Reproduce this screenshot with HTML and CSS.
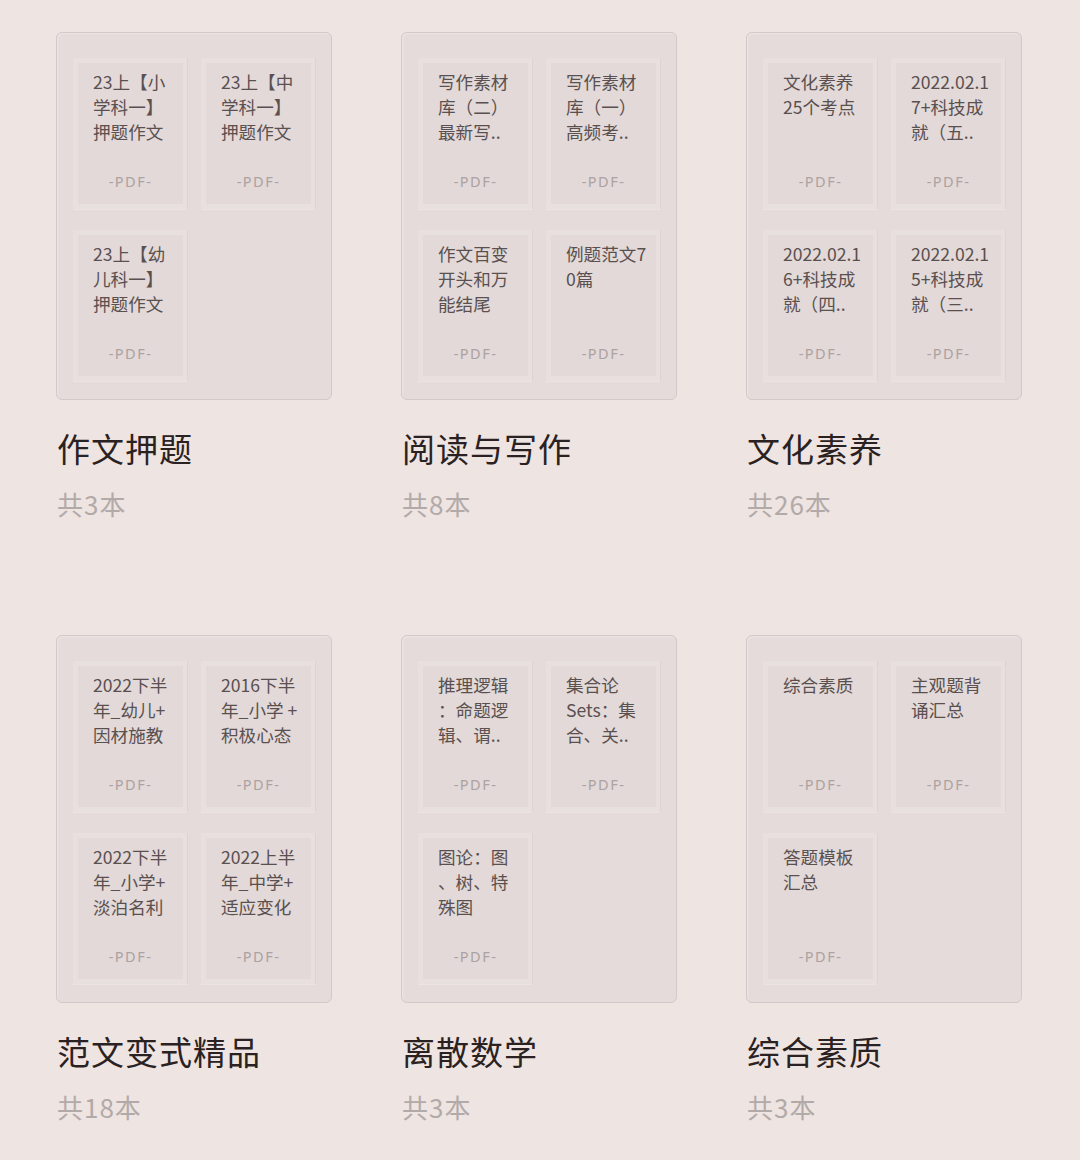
FILE: index.html
```html
<!DOCTYPE html>
<html lang="zh">
<head>
<meta charset="utf-8">
<link rel="stylesheet" href="styles.css">
</head>
<body>
<main class="shelf">
  <section class="group">
    <div class="cover">
      <div class="book"><div class="book-title"><span>23上【小</span><span>学科一】</span><span>押题作文</span></div><div class="pdf">-PDF-</div></div>
      <div class="book"><div class="book-title"><span>23上【中</span><span>学科一】</span><span>押题作文</span></div><div class="pdf">-PDF-</div></div>
      <div class="book"><div class="book-title"><span>23上【幼</span><span>儿科一】</span><span>押题作文</span></div><div class="pdf">-PDF-</div></div>
    </div>
    <h2 class="name">作文押题</h2>
    <p class="count">共3本</p>
  </section>
  <section class="group">
    <div class="cover">
      <div class="book"><div class="book-title"><span>写作素材</span><span>库（二）</span><span>最新写..</span></div><div class="pdf">-PDF-</div></div>
      <div class="book"><div class="book-title"><span>写作素材</span><span>库（一）</span><span>高频考..</span></div><div class="pdf">-PDF-</div></div>
      <div class="book"><div class="book-title"><span>作文百变</span><span>开头和万</span><span>能结尾</span></div><div class="pdf">-PDF-</div></div>
      <div class="book"><div class="book-title"><span>例题范文7</span><span>0篇</span></div><div class="pdf">-PDF-</div></div>
    </div>
    <h2 class="name">阅读与写作</h2>
    <p class="count">共8本</p>
  </section>
  <section class="group">
    <div class="cover">
      <div class="book"><div class="book-title"><span>文化素养</span><span>25个考点</span></div><div class="pdf">-PDF-</div></div>
      <div class="book"><div class="book-title"><span>2022.02.1</span><span>7+科技成</span><span>就（五..</span></div><div class="pdf">-PDF-</div></div>
      <div class="book"><div class="book-title"><span>2022.02.1</span><span>6+科技成</span><span>就（四..</span></div><div class="pdf">-PDF-</div></div>
      <div class="book"><div class="book-title"><span>2022.02.1</span><span>5+科技成</span><span>就（三..</span></div><div class="pdf">-PDF-</div></div>
    </div>
    <h2 class="name">文化素养</h2>
    <p class="count">共26本</p>
  </section>
  <section class="group">
    <div class="cover">
      <div class="book"><div class="book-title"><span>2022下半</span><span>年_幼儿+</span><span>因材施教</span></div><div class="pdf">-PDF-</div></div>
      <div class="book"><div class="book-title"><span>2016下半</span><span>年_小学 +</span><span>积极心态</span></div><div class="pdf">-PDF-</div></div>
      <div class="book"><div class="book-title"><span>2022下半</span><span>年_小学+</span><span>淡泊名利</span></div><div class="pdf">-PDF-</div></div>
      <div class="book"><div class="book-title"><span>2022上半</span><span>年_中学+</span><span>适应变化</span></div><div class="pdf">-PDF-</div></div>
    </div>
    <h2 class="name">范文变式精品</h2>
    <p class="count">共18本</p>
  </section>
  <section class="group">
    <div class="cover">
      <div class="book"><div class="book-title"><span>推理逻辑</span><span>：命题逻</span><span>辑、谓..</span></div><div class="pdf">-PDF-</div></div>
      <div class="book"><div class="book-title"><span>集合论</span><span>Sets：集</span><span>合、关..</span></div><div class="pdf">-PDF-</div></div>
      <div class="book"><div class="book-title"><span>图论：图</span><span>、树、特</span><span>殊图</span></div><div class="pdf">-PDF-</div></div>
    </div>
    <h2 class="name">离散数学</h2>
    <p class="count">共3本</p>
  </section>
  <section class="group">
    <div class="cover">
      <div class="book"><div class="book-title"><span>综合素质</span></div><div class="pdf">-PDF-</div></div>
      <div class="book"><div class="book-title"><span>主观题背</span><span>诵汇总</span></div><div class="pdf">-PDF-</div></div>
      <div class="book"><div class="book-title"><span>答题模板</span><span>汇总</span></div><div class="pdf">-PDF-</div></div>
    </div>
    <h2 class="name">综合素质</h2>
    <p class="count">共3本</p>
  </section>
</main>
</body>
</html>
```

FILE: styles.css
```css
html, body {
  margin: 0;
  padding: 0;
  background: #eee4e1;
}

body {
  font-family: "Noto Sans CJK SC", "Noto Sans", sans-serif;
  width: 1080px;
  height: 1160px;
  overflow: hidden;
}

.shelf {
  display: grid;
  grid-template-columns: repeat(3, 276px);
  column-gap: 69px;
  row-gap: 115px;
  padding: 32px 0 0 56px;
}

.cover {
  box-sizing: border-box;
  width: 276px;
  height: 368px;
  background: #e4dbda;
  border: 1px solid #d3c9c8;
  border-radius: 6px;
  padding: 25px 17px 0 16px;
  display: grid;
  grid-template-columns: 114px 114px;
  grid-template-rows: 151px 151px;
  column-gap: 14px;
  row-gap: 21px;
  box-shadow: inset 1px 1px 2px rgba(255, 255, 255, 0.35);
}

.book {
  box-sizing: border-box;
  border: 5px solid #e8e0df;
  border-right-width: 4px;
  background: #e2d9d8;
  display: flex;
  flex-direction: column;
  padding: 6px 0 0 15px;
  box-shadow: 0 1px 0 #ebe4e3, 1px 0 0 #ddd4d3;
}

.book-title {
  display: flex;
  flex-direction: column;
  font-size: 17.6px;
  line-height: 25px;
  color: #5a5050;
  white-space: nowrap;
  height: 94px;
}

.pdf {
  margin-top: 8px;
  margin-left: -15px;
  text-align: center;
  font-size: 14.5px;
  line-height: 20px;
  letter-spacing: 1.5px;
  color: #aca2a1;
  font-family: "Noto Sans", "Noto Sans CJK SC", sans-serif;
}

.name {
  margin: 28px 0 0 1px;
  font-size: 33px;
  line-height: 40px;
  font-weight: 400;
  color: #2a2222;
  letter-spacing: 1px;
}

.count {
  margin: 20px 0 0 1px;
  font-size: 26px;
  line-height: 32px;
  letter-spacing: 1px;
  color: #b2aaa8;
}
```
